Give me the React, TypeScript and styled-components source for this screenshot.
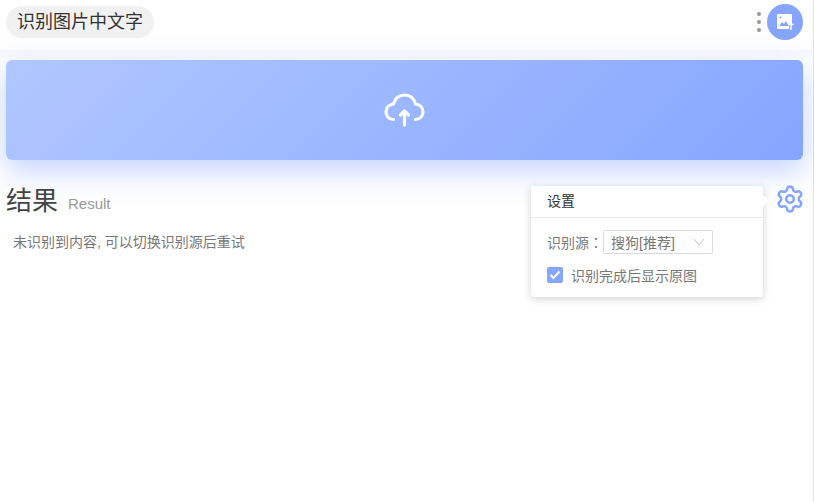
import { Settings } from 'lucide-react';
import styled, { createGlobalStyle } from 'styled-components';

const GlobalStyle = createGlobalStyle`
	html, body {
		margin: 0;
		height: 100%;
		background: #fff;
	}
	body {
		font-family: 'Liberation Sans', 'Noto Sans CJK SC', sans-serif;
		overflow: hidden;
	}
`;

const Page = styled.div`
	height: 502px;
	box-sizing: border-box;
	border-right: 1px solid #e6e6e6;
	width: 814px;
	padding: 0 10px 0 6px;
`;

const Header = styled.header`
	height: 44px;
	display: flex;
	align-items: center;
	justify-content: space-between;
`;

const TitlePill = styled.h1`
	margin: 0;
	height: 32px;
	line-height: 32px;
	padding: 0 11px;
	border-radius: 16px;
	background: #f1f1f1;
	color: #333;
	font-size: 18px;
	font-weight: 400;
`;

const HeaderActions = styled.div`
	display: flex;
	align-items: center;
	gap: 6px;
`;

const Dots = styled.div`
	display: flex;
	flex-direction: column;
	gap: 4px;

	& > i {
		display: block;
		width: 4px;
		height: 4px;
		border-radius: 50%;
		background: #999;
	}
`;

const Avatar = styled.div`
	width: 36px;
	height: 36px;
	border-radius: 50%;
	background: #86a5ff;
	display: flex;
	align-items: center;
	justify-content: center;
`;

const UploadBand = styled.div`
	margin: 6px -10px 0 -6px;
	padding: 10px 10px 0 6px;
	background: linear-gradient(#f6f8ff, #fff 10px);
`;

const UploadBar = styled.div`
	height: 100px;
	border-radius: 6px;
	background: linear-gradient(135deg, #b0c8ff, #86a5ff);
	box-shadow: 0 10px 30px rgba(134, 165, 255, 0.5);
	display: flex;
	align-items: center;
	justify-content: center;
`;

const ResultHead = styled.div`
	position: relative;
	margin-top: 26px;
	height: 30px;
	display: flex;
	align-items: flex-end;
	gap: 10px;
`;

const ResultTitle = styled.h2`
	margin: 0;
	font-size: 26px;
	line-height: 30px;
	font-weight: 400;
	color: #444;
`;

const ResultSub = styled.span`
	font-size: 15px;
	line-height: 20px;
	padding-bottom: 2px;
	color: #999;
`;

const GearButton = styled.div`
	position: absolute;
	right: -2px;
	top: -2px;
	line-height: 0;
`;

const Popover = styled.div`
	position: absolute;
	right: 40px;
	top: 0;
	width: 232px;
	height: 111px;
	background: #fff;
	border-radius: 3px;
	box-shadow: 0 2px 8px rgba(0, 0, 0, 0.18);
	z-index: 2;

	&::after {
		content: '';
		position: absolute;
		right: -4px;
		top: 11px;
		width: 8px;
		height: 8px;
		background: #fff;
		transform: rotate(45deg);
	}
`;

const PopoverTitle = styled.div`
	height: 31px;
	line-height: 31px;
	padding-left: 16px;
	border-bottom: 1px solid #e8e8e8;
	font-size: 14px;
	color: #333;
`;

const PopoverBody = styled.div`
	padding: 12px 16px 0;
	display: flex;
	flex-direction: column;
	gap: 11px;
	font-size: 14px;
	color: #777;
`;

const Row = styled.div`
	display: flex;
	align-items: center;
`;

const Colon = styled.span`
	font-family: 'Noto Sans CJK TC', sans-serif;
`;

const SelectBox = styled.div`
	box-sizing: border-box;
	width: 110px;
	height: 24px;
	border: 1px solid #d9d9d9;
	border-radius: 2px;
	padding: 0 7px 0 7px;
	display: flex;
	align-items: center;
	justify-content: space-between;
`;

const Check = styled.span`
	width: 16px;
	height: 16px;
	border-radius: 2px;
	background: #86a5ff;
	margin-right: 8px;
	display: flex;
	align-items: center;
	justify-content: center;
`;

const Message = styled.p`
	margin: 17px 0 0 7px;
	font-size: 14px;
	line-height: 18px;
	color: #777;
`;

export default function App() {
	return (
		<Page>
			<GlobalStyle />
			<Header>
				<TitlePill>识别图片中文字</TitlePill>
				<HeaderActions>
					<Dots>
						<i />
						<i />
						<i />
					</Dots>
					<Avatar>
						<svg width="18" height="18" viewBox="0 0 18 18">
							<path d="M2 1h13a1 1 0 0 1 1 1v9h-3v5H2a1 1 0 0 1-1-1V2a1 1 0 0 1 1-1z" fill="#fff" />
							<circle cx="4.500" cy="4.500" r="1" fill="#86a5ff" />
							<path d="M3 13l3-4 2 2 2-3 3 5z" fill="#86a5ff" />
							<path d="M12.500 11.500h5M15 11.500V17" stroke="#fff" strokeWidth="1.400" />
						</svg>
					</Avatar>
				</HeaderActions>
			</Header>
			<UploadBand>
				<UploadBar>
					<svg width="41" height="36" viewBox="0 0 41 36" fill="none" stroke="#fff" strokeWidth="3.200" strokeLinecap="round" strokeLinejoin="round">
						<path d="M9.500 27.500C5 27.500 2 24 2 20C2 15.500 5 12.500 9.500 12C11 6.500 15 3 20.500 3C26 3 30 6.500 31.500 12C36 12.500 39 15.500 39 20C39 24 36 27.500 31.500 27.500" />
						<path d="M20.500 33V19M16.500 23l4-4 4 4" />
					</svg>
				</UploadBar>
			</UploadBand>
			<ResultHead>
				<ResultTitle>结果</ResultTitle>
				<ResultSub>Result</ResultSub>
				<Popover>
					<PopoverTitle>设置</PopoverTitle>
					<PopoverBody>
						<Row>
							识别源<Colon>：</Colon>
							<SelectBox>
								搜狗[推荐]
								<svg width="12" height="8" viewBox="0 0 12 8" fill="none" stroke="#c4c4c4">
									<path d="M1 1l5 6 5-6" />
								</svg>
							</SelectBox>
						</Row>
						<Row>
							<Check>
								<svg width="12" height="10" viewBox="0 0 12 10" fill="none" stroke="#fff" strokeWidth="2">
									<path d="M1.500 5l3 3 6-6.500" />
								</svg>
							</Check>
							识别完成后显示原图
						</Row>
					</PopoverBody>
				</Popover>
				<GearButton>
					<Settings size={30} color="#86a5ff" strokeWidth={2} />
				</GearButton>
			</ResultHead>
			<Message>未识别到内容, 可以切换识别源后重试</Message>
		</Page>
	);
}
